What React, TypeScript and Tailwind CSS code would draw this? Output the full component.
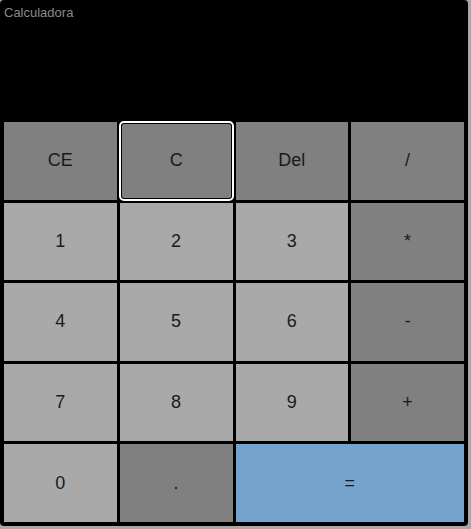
const keys: { label: string; tone: "dark" | "light" | "blue"; span?: boolean; focus?: boolean }[] = [
  { label: "CE", tone: "dark" },
  { label: "C", tone: "dark", focus: true },
  { label: "Del", tone: "dark" },
  { label: "/", tone: "dark" },
  { label: "1", tone: "light" },
  { label: "2", tone: "light" },
  { label: "3", tone: "light" },
  { label: "*", tone: "dark" },
  { label: "4", tone: "light" },
  { label: "5", tone: "light" },
  { label: "6", tone: "light" },
  { label: "-", tone: "dark" },
  { label: "7", tone: "light" },
  { label: "8", tone: "light" },
  { label: "9", tone: "light" },
  { label: "+", tone: "dark" },
  { label: "0", tone: "light" },
  { label: ".", tone: "dark" },
  { label: "=", tone: "blue", span: true },
];

const toneClass = {
  dark: "bg-[#808080]",
  light: "bg-[#a9a9a9]",
  blue: "bg-[#74a4cd]",
};

export default function App() {
  return (
    <div className="min-h-screen bg-[#a8a8a8] font-['Liberation_Sans',Arial,sans-serif]">
      <div className="w-[468px] h-[526px] bg-black rounded-[4px] flex flex-col">
        <div className="h-[122px] px-[4px] pt-[5px] text-[13px] leading-[15px] text-[#8a8a8a]">
          Calculadora
        </div>
        <div className="flex-1 grid grid-cols-4 grid-rows-5 gap-[3px] px-[4px] pb-[4px]">
          {keys.map((k) => (
            <button
              key={k.label}
              className={
                toneClass[k.tone] +
                " flex items-center justify-center text-[18px] text-[#1a1a1a] " +
                (k.span ? "col-span-2 " : "") +
                (k.focus ? "rounded-[4px] outline-2 outline-white -outline-offset-1 shadow-[inset_0_0_0_2px_#000]" : "")
              }
            >
              {k.label}
            </button>
          ))}
        </div>
      </div>
    </div>
  );
}
